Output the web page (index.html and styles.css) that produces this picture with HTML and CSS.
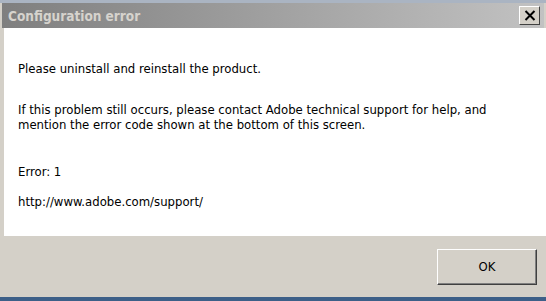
FILE: index.html
```html
<!DOCTYPE html>
<html>
<head>
<meta charset="utf-8">
<link rel="stylesheet" href="styles.css">
</head>
<body>
<div class="window">
  <div class="topline"></div>
  <div class="titlebar">
    <span class="title">Configuration error</span>
    <button class="close" aria-label="Close">
      <svg width="12" height="11" viewBox="0 0 12 11"><path d="M1.5 1 L10.5 10 M10.5 1 L1.5 10" stroke="#000" stroke-width="2" fill="none"/></svg>
    </button>
  </div>
  <div class="content">
    <p class="msg first">Please uninstall and reinstall the product.</p>
    <p class="msg">If this problem still occurs, please contact Adobe technical support for help, and<br>mention the error code shown at the bottom of this screen.</p>
    <p class="msg err">Error: 1</p>
    <p class="msg">http://www.adobe.com/support/</p>
  </div>
  <div class="footer">
    <button class="ok">OK</button>
  </div>
  <div class="bottomline"></div>
</div>
</body>
</html>
```
FILE: styles.css
```css
html, body {
  margin: 0;
  padding: 0;
  background: #d4d0c8;
}
.window {
  width: 546px;
  height: 301px;
  display: flex;
  flex-direction: column;
  font-family: "DejaVu Sans Condensed", "DejaVu Sans", sans-serif;
  font-stretch: condensed;
  overflow: hidden;
}
.topline {
  height: 3px;
  background: #aab4c2;
}
.titlebar {
  height: 25px;
  display: flex;
  align-items: center;
  justify-content: space-between;
  background: linear-gradient(to right, #7f7f7f, #c2c2c2);
  padding: 0 4px 0 6px;
  margin: 0 2px;
}
.title {
  color: #d6d3cd;
  font-weight: bold;
  font-size: 13.5px;
}
.close {
  width: 21px;
  height: 19px;
  padding: 0;
  display: flex;
  align-items: center;
  justify-content: center;
  background: #d4d0c8;
  border: 1px solid;
  border-color: #fff #404040 #404040 #fff;
}
.content {
  flex: 1;
  background: #fff;
  border-left: 2px solid #d4d0c8;
  padding: 33px 18px 0 14px;
  margin-left: 2px;
}
.msg {
  margin: 0 0 15px 0;
  font-size: 13px;
  line-height: 15px;
  color: #000;
}
.first {
  margin-bottom: 26px;
}
.err {
  margin-top: 32px;
}
.footer {
  height: 61px;
  display: flex;
  justify-content: flex-end;
  align-items: center;
  padding-right: 9px;
  background: #d4d0c8;
}
.ok {
  width: 100px;
  height: 36px;
  font-family: "DejaVu Sans Condensed", "DejaVu Sans", sans-serif;
  font-stretch: condensed;
  font-size: 13px;
  color: #000;
  background: #d4d0c8;
  border: 1px solid;
  border-color: #fff #404040 #404040 #fff;
  box-shadow: inset -1px -1px 0 #808080;
}
.bottomline {
  height: 4px;
  background: #3d5f88;
}
```
